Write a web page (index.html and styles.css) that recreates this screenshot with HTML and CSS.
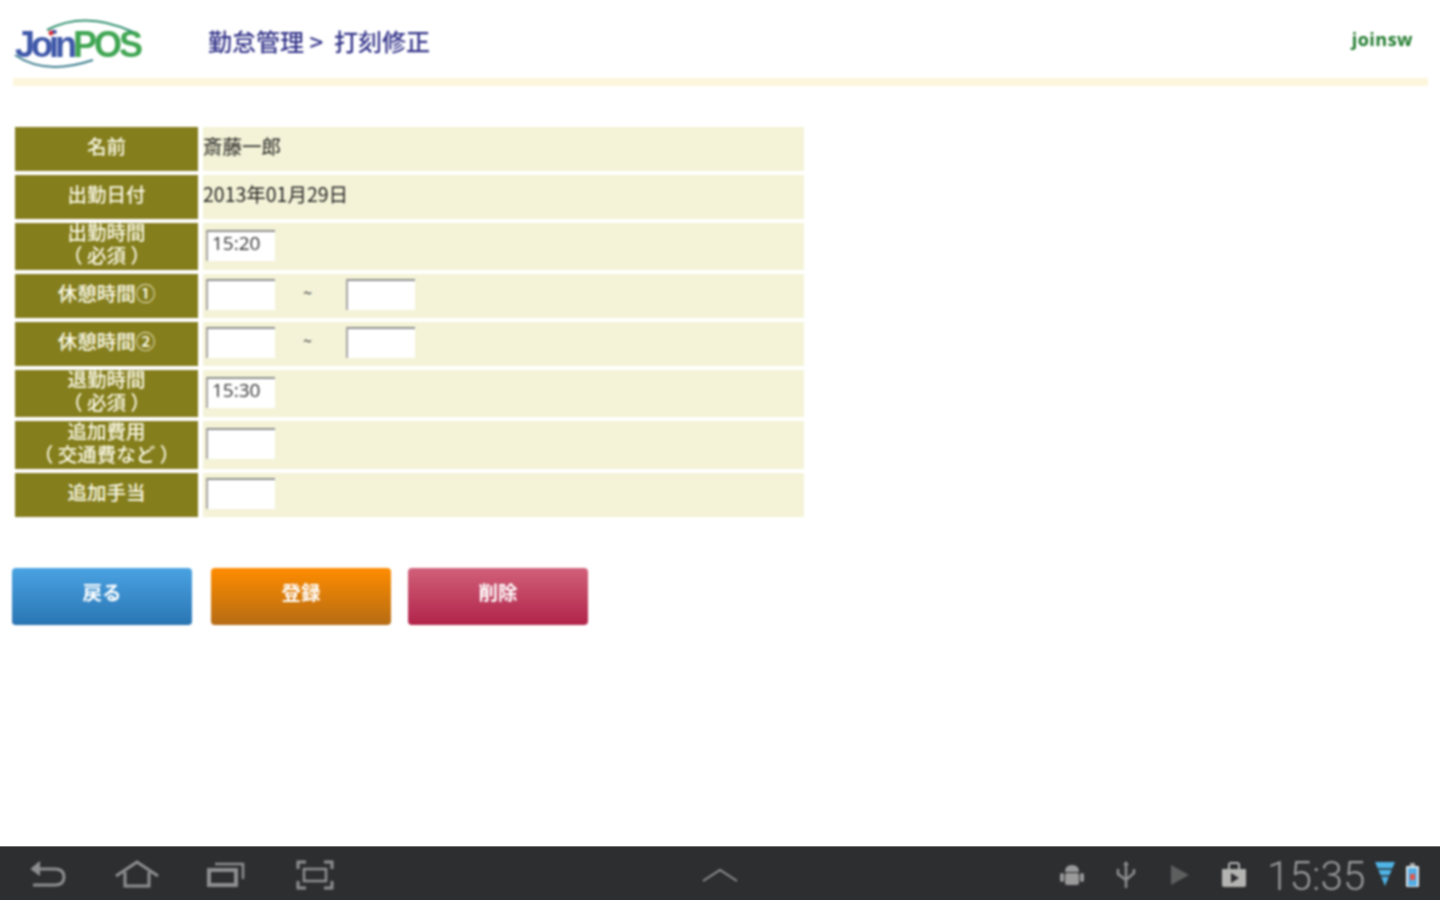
FILE: index.html
```html
<!DOCTYPE html>
<html lang="ja">
<head>
<meta charset="utf-8">
<title>JoinPOS 打刻修正</title>
<link rel="stylesheet" href="styles.css">
</head>
<body>
<div class="screen">
  <main class="page">
    <header class="header">
      <div class="logo">
        <span class="logo-text"><span class="logo-join">Join</span><span class="logo-pos">POS</span></span>
        <svg class="logo-arcs" width="140" height="60" viewBox="0 0 140 60">
          <path d="M47 20 Q85 0 133 22" fill="none" stroke="#2f8f6f" stroke-width="2"/>
          <path d="M15 45 Q45 66 93 50" fill="none" stroke="#3f7f8f" stroke-width="2"/>
          <circle cx="51" cy="23" r="2.500" fill="#d8303a"/>
        </svg>
      </div>
      <h1 class="title">勤怠管理 &gt;&nbsp; 打刻修正</h1>
      <div class="user">joinsw</div>
    </header>
    <div class="rule"></div>

    <form class="form">
      <div class="label">名前</div>
      <div class="value">斎藤一郎</div>

      <div class="label">出勤日付</div>
      <div class="value">2013年01月29日</div>

      <div class="label tall">出勤時間<br>（ 必須 ）</div>
      <div class="value tall"><input class="field" type="text" value="15:20"></div>

      <div class="label">休憩時間①</div>
      <div class="value"><input class="field" type="text"><span class="tilde">~</span><input class="field" type="text"></div>

      <div class="label">休憩時間②</div>
      <div class="value"><input class="field" type="text"><span class="tilde">~</span><input class="field" type="text"></div>

      <div class="label tall">退勤時間<br>（ 必須 ）</div>
      <div class="value tall"><input class="field" type="text" value="15:30"></div>

      <div class="label taller">追加費用<br>（ 交通費など ）</div>
      <div class="value taller"><input class="field" type="text"></div>

      <div class="label">追加手当</div>
      <div class="value"><input class="field" type="text"></div>
    </form>

    <div class="actions">
      <button class="btn btn-blue" type="button">戻る</button>
      <button class="btn btn-orange" type="button">登録</button>
      <button class="btn btn-red" type="button">削除</button>
    </div>
  </main>

  <nav class="navbar">
    <div class="nav-left">
      <span class="nav-slot">
        <svg width="38" height="30" viewBox="0 0 38 30" fill="none" stroke="#8e8f90" stroke-width="3">
          <path d="M3 9 H26 Q35 9 35 17 Q35 25 26 25 H4"/>
          <path d="M11 2 L3 9 L11 15" fill="#8e8f90" stroke-width="2"/>
        </svg>
      </span>
      <span class="nav-slot">
        <svg width="46" height="28" viewBox="0 0 46 28" fill="none" stroke="#8e8f90" stroke-width="3">
          <path d="M2 16 L23 2 L44 16"/>
          <path d="M11 12 V26 H35 V12"/>
        </svg>
      </span>
      <span class="nav-slot">
        <svg width="38" height="28" viewBox="0 0 38 28" fill="none" stroke="#8e8f90">
          <rect x="2" y="10" width="27" height="15" stroke-width="4"/>
          <path d="M8 4 H36 V19" stroke-width="2.500"/>
        </svg>
      </span>
      <span class="nav-slot">
        <svg width="38" height="30" viewBox="0 0 38 30" fill="none" stroke="#8e8f90" stroke-width="3">
          <path d="M2 9 V2 H10 M28 2 H36 V9 M2 21 V28 H10 M28 28 H36 V21"/>
          <rect x="8" y="9" width="22" height="12" stroke-width="2.500"/>
        </svg>
      </span>
    </div>
    <div class="nav-center">
      <svg width="36" height="14" viewBox="0 0 36 14" fill="none" stroke="#8e8f90" stroke-width="2">
        <path d="M1 13 L18 2 L35 13"/>
      </svg>
    </div>
    <div class="nav-right">
      <span class="status-slot">
        <svg width="26" height="24" viewBox="0 0 26 24" fill="#9a9a9a">
          <path d="M6 9 Q6 2 13 2 Q20 2 20 9 Z"/>
          <rect x="6" y="10" width="14" height="12" rx="2"/>
          <rect x="1" y="10" width="4" height="9" rx="2"/>
          <rect x="21" y="10" width="4" height="9" rx="2"/>
        </svg>
      </span>
      <span class="status-slot">
        <svg width="22" height="30" viewBox="0 0 22 30" fill="none" stroke="#8e8f90" stroke-width="2.500">
          <path d="M11 3 V28"/>
          <path d="M3 9 V14 L11 20 L19 13 V9"/>
          <path d="M11 1 L8 5 H14 Z" fill="#8e8f90" stroke="none"/>
        </svg>
      </span>
      <span class="status-slot">
        <svg width="18" height="20" viewBox="0 0 18 20"><path d="M0 0 L18 10 L0 20 Z" fill="#5d5f5e"/></svg>
      </span>
      <span class="status-slot">
        <svg width="26" height="26" viewBox="0 0 26 26">
          <path d="M1 7 H25 V23 Q25 25 23 25 H3 Q1 25 1 23 Z" fill="#b4b4b2"/>
          <path d="M8 7 V3 Q8 1 10 1 H16 Q18 1 18 3 V7" fill="none" stroke="#b4b4b2" stroke-width="2"/>
          <path d="M10 11 L18 16 L10 21 Z" fill="#2d2e30"/>
        </svg>
      </span>
      <span class="clock">15:35</span>
      <svg class="wifi" width="20" height="26" viewBox="0 0 20 26"><path d="M0 1 H20 L10 25 Z" fill="#4fb4e6"/><path d="M2 8 H18 M5 15 H15" stroke="#2d2e30" stroke-width="1.500"/></svg>
      <svg class="battery" width="13" height="24" viewBox="0 0 13 24">
        <rect x="4" y="0" width="5" height="3" fill="#a8a8a8"/>
        <rect x="0" y="3" width="13" height="21" rx="1" fill="#dfe6ea"/>
        <rect x="2" y="5" width="9" height="18" fill="#54aee6"/>
        <rect x="4" y="11" width="5" height="6" fill="#e2574c"/>
      </svg>
    </div>
  </nav>
</div>
</body>
</html>
```
FILE: styles.css
```css
* { box-sizing: border-box; }

html, body {
  margin: 0;
  background: #fff;
}

body {
  font-family: "Noto Sans CJK JP", "Noto Sans", sans-serif;
  overflow: hidden;
}

.screen {
  width: 1440px;
  height: 900px;
  display: flex;
  flex-direction: column;
}

.page,
.nav-left,
.nav-center,
.nav-right {
  filter: blur(0.9px);
}

.page {
  flex: 1;
  display: flex;
  flex-direction: column;
}

/* header */
.header {
  height: 78px;
  display: flex;
  align-items: center;
  padding: 0 27px 0 15px;
  flex-shrink: 0;
}

.logo {
  position: relative;
  width: 193px;
  height: 60px;
  margin-top: 8px;
  flex-shrink: 0;
}

.logo-text {
  font: bold 36px/1 "Liberation Sans", sans-serif;
  display: block;
  padding-top: 14px;
  white-space: nowrap;
}

.logo-join { color: #3d57a8; letter-spacing: -4px; }
.logo-pos { color: #3fa552; letter-spacing: -3px; }

.logo-arcs {
  position: absolute;
  left: -15px;
  top: -3px;
}

.title {
  margin: 4px 0 0;
  font-size: 24px;
  line-height: 30px;
  font-weight: 500;
  color: #33338a;
  white-space: nowrap;
  flex: 1;
}

.user {
  font: bold 18px/24px "Open Sans", sans-serif;
  color: #1f7a2c;
  letter-spacing: 0.500px;
}

.rule {
  height: 8px;
  margin: 0 12px 0 13px;
  background: #fdf5dc;
}

/* form */
.form {
  margin: 41px 0 0 15px;
  display: grid;
  grid-template-columns: 183px 601px;
  column-gap: 5px;
  row-gap: 4px;
  font-size: 19.500px;
  line-height: 23px;
}

.label,
.value {
  height: 44px;
  display: flex;
  align-items: center;
  padding-bottom: 7px;
}

.label {
  justify-content: center;
  text-align: center;
  background: #857e1d;
  color: #fbfae8;
  font-weight: 500;
}

.value {
  background: #f4f3d8;
  color: #222;
}

.tall { height: 47px; }
.taller { height: 48px; }

.field {
  width: 69px;
  height: 31px;
  margin: 4px 0 0 3px;
  padding: 0 0 6px 4px;
  border: 0;
  border-top: 2px solid #8f8f8f;
  border-left: 2px solid #a5a5a5;
  background: #fff;
  font: 19px/22px "Open Sans", sans-serif;
  color: #333;
  border-radius: 0;
  outline: none;
}

.tilde {
  width: 65px;
  margin: 0 3px;
  padding-right: 6px;
  text-align: center;
  font-size: 16px;
  font-weight: 500;
  color: #555;
}

.tilde + .field {
  margin-left: 0;
}

/* buttons */
.actions {
  margin: 51px 0 0 12px;
  display: flex;
  gap: 18px;
}

.btn {
  width: 180px;
  height: 57px;
  padding: 0 0 9px;
  border: 0;
  border-radius: 4px;
  color: #fff;
  font: bold 19.500px/24px "Noto Sans CJK JP", sans-serif;
}

.btn-blue { background: linear-gradient(#4aa2e2, #2a76b4); border-bottom: 1px solid #1f6aa8; }
.btn-orange { background: linear-gradient(#ff8c00, #b56c14); margin-left: 1px; }
.btn-red { background: linear-gradient(#d16079, #b1244a); margin-left: -1px; }

/* system bar */
.navbar {
  height: 54px;
  flex-shrink: 0;
  background: #2d2e30;
  border-top: 1px solid #77787a;
  display: grid;
  grid-template-columns: 1fr auto 1fr;
  align-items: center;
  padding-top: 2px;
}

.nav-left {
  display: flex;
  padding-left: 3px;
}

.nav-slot {
  width: 89px;
  display: flex;
  justify-content: center;
}

.nav-center {
  display: flex;
}

.nav-right {
  display: flex;
  align-items: center;
  justify-content: flex-end;
  padding-right: 21px;
}

.status-slot {
  width: 54px;
  display: flex;
  justify-content: center;
}

.clock {
  margin: 2px 0 0 6px;
  font: 300 40.500px/50px Roboto, sans-serif;
  color: #9a9b9c;
  width: 108px;
}

.wifi { margin-right: 11px; margin-bottom: 2px; }
```
